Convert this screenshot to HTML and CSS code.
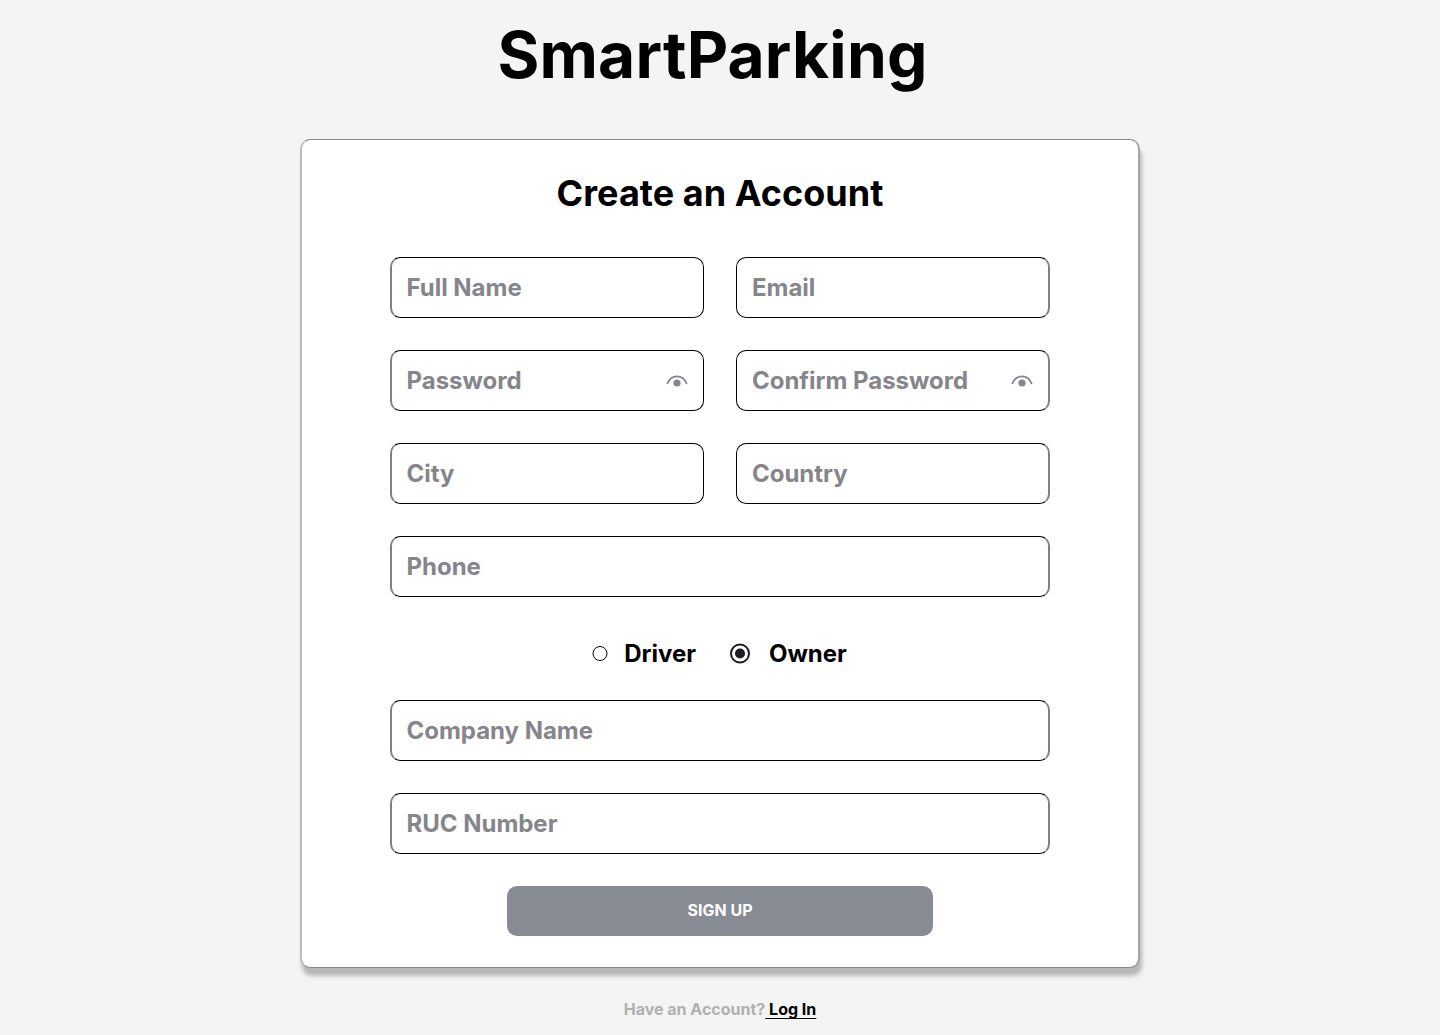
FILE: index.html
```html
<!DOCTYPE html>
<html lang="en">
<head>
<meta charset="utf-8">
<title>SmartParking</title>
<link rel="stylesheet" href="styles.css">
</head>
<body>
<h1 class="brand">SmartParking</h1>
<main class="card">
  <h2 class="title">Create an Account</h2>
  <form class="form">
    <div class="field start">Full Name</div>
    <div class="field end">Email</div>
    <div class="field start">Password<svg class="eye" viewBox="0 0 22 12"><path d="M1.2 9C5 -1.2 17 -1.2 20.8 9" fill="none" stroke="currentColor" stroke-width="1.8"/><circle cx="11" cy="8" r="3.6" fill="currentColor"/></svg></div>
    <div class="field end">Confirm Password<svg class="eye" viewBox="0 0 22 12"><path d="M1.2 9C5 -1.2 17 -1.2 20.8 9" fill="none" stroke="currentColor" stroke-width="1.8"/><circle cx="11" cy="8" r="3.6" fill="currentColor"/></svg></div>
    <div class="field start">City</div>
    <div class="field end">Country</div>
    <div class="field start end wide">Phone</div>
    <div class="roles wide">
      <label class="role driver"><svg class="radio" viewBox="0 0 22 22"><circle cx="11" cy="10.5" r="7" fill="#fff" stroke="#000"/></svg>Driver</label>
      <label class="role"><svg class="radio" viewBox="0 0 22 22"><circle cx="11" cy="10.5" r="9" fill="#fff" stroke="#1d1b20" stroke-width="2"/><circle cx="11" cy="10.5" r="5" fill="#1d1b20"/></svg>Owner</label>
    </div>
    <div class="field start end wide">Company Name</div>
    <div class="field start end wide">RUC Number</div>
  </form>
  <button class="submit" type="button">SIGN UP</button>
</main>
<p class="login">Have an Account?<a class="link" href="#"> Log In</a></p>
</body>
</html>
```
FILE: styles.css
```css
* { box-sizing: border-box; }
body {
  margin: 0;
  height: 1035px;
  overflow: hidden;
  background: #f4f4f4;
  font-family: Inter, sans-serif;
  font-weight: 700;
  color: #000;
  display: flex;
  flex-direction: column;
  align-items: center;
}
.brand {
  margin: 16px 15px 0 0;
  font-size: 64px;
  line-height: 78px;
  letter-spacing: .17px;
}
.card {
  width: 840px;
  height: 829px;
  margin-top: 45px;
  padding: 30px 88px 0;
  background: #fff;
  border: 1px solid #85858b;
  border-left: 2px solid #bcbcc0;
  border-right: 2px solid #a5a5aa;
  border-radius: 10px;
  box-shadow: 2px 8px 4px rgba(0, 0, 0, .25);
}
.title {
  margin: 0;
  font-size: 36px;
  line-height: 46px;
  letter-spacing: .03px;
  text-align: center;
}
.form {
  margin-top: 41px;
  display: grid;
  grid-template-columns: 314px 314px;
  column-gap: 32px;
  row-gap: 32px;
}
.field {
  height: 61px;
  padding: 0 16px 0 15px;
  border: 1px solid #000;
  border-radius: 10px;
  font-size: 24px;
  letter-spacing: -.02px;
  color: #85858b;
  display: flex;
  align-items: center;
  justify-content: space-between;
}
.start { border-left: 2px solid #808080; padding-left: 14.5px; }
.end { border-right: 2px solid #808080; }
.wide { grid-column: span 2; }
.eye { width: 22px; height: 12px; margin-right: -.5px; }
.roles {
  height: 39px;
  padding: 10px 4px 0 0;
  display: flex;
  justify-content: center;
  gap: 33px;
}
.role {
  display: flex;
  align-items: center;
  gap: 18px;
  font-size: 24px;
  letter-spacing: -.03px;
}
.driver { gap: 13px; }
.radio { width: 22px; height: 22px; }
.submit {
  display: block;
  width: 426px;
  height: 50px;
  margin: 32px auto 0;
  padding: 0 0 2px;
  border: 0;
  border-radius: 10px;
  background: #878b93;
  color: #fff;
  font: 700 16px Inter, sans-serif;
}
.login {
  margin: 32px 0 0;
  font-size: 16px;
  line-height: 19px;
  color: #b0b0b0;
}
.link {
  color: #000;
  text-decoration-thickness: 1px;
  text-underline-offset: 3px;
  text-decoration-skip-ink: none;
}
```
